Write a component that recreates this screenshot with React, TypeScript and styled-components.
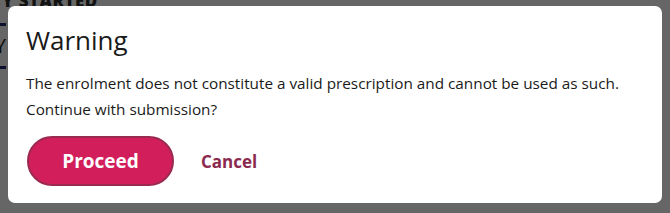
import React from 'react'
import styled, { createGlobalStyle } from 'styled-components'

const GlobalStyle = createGlobalStyle`
  html, body {
    margin: 0;
    padding: 0;
    background: #ffffff;
  }
  body {
    font-family: 'Open Sans', 'Liberation Sans', sans-serif;
  }
`

export default function App() {
    return (
        <Page>
            <GlobalStyle />
            <Behind>
                <StepTitle>Y STARTED</StepTitle>
                <StepBox>Y</StepBox>
            </Behind>

            <Overlay>
                <Modal role="dialog" aria-labelledby="warning_title">
                    <Title id="warning_title">Warning</Title>
                    <Message>
                        The enrolment does not constitute a valid prescription and cannot be used as such.
                        <br />
                        Continue with submission?
                    </Message>
                    <Actions>
                        <PrimaryButton type="button">Proceed</PrimaryButton>
                        <LinkButton type="button">Cancel</LinkButton>
                    </Actions>
                </Modal>
            </Overlay>
        </Page>
    )
}

const Page = styled.div`
  position: relative;
  width: 670px;
  height: 213px;
  overflow: hidden;
`

const Behind = styled.div`
  display: flex;
  flex-direction: column;
  margin-left: -60px;
  margin-top: -7px;
`

const StepTitle = styled.div`
  margin-left: 62px;
  font-weight: 800;
  font-size: 17px;
  line-height: 15px;
  letter-spacing: 0.5px;
  color: #2e2e2e;
`

const StepBox = styled.div`
  margin-top: 15px;
  width: 66px;
  height: 40px;
  border-top: 3px solid #1f2a6e;
  border-bottom: 3px solid #1f2a6e;
  text-align: right;
  font-size: 20px;
  line-height: 40px;
  color: #222;
`

const Overlay = styled.div`
  position: absolute;
  inset: 0;
  background: rgba(0, 0, 0, 0.6);
  padding: 6px 8px 10px 8px;
  box-sizing: border-box;
`

const Modal = styled.div`
  box-sizing: border-box;
  width: 654px;
  height: 197px;
  background: #ffffff;
  border-radius: 7px;
  padding: 17px 18px 0 18px;
  color: #1a1a1a;
`

const Title = styled.h2`
  margin: 0;
  font-size: 26px;
  font-weight: 400;
  line-height: 34px;
  color: #1a1a1a;
`

const Message = styled.p`
  margin: 13px 0 0 0;
  font-size: 15.3px;
  line-height: 26px;
  color: #1a1a1a;
`

const Actions = styled.div`
  display: flex;
  align-items: center;
  gap: 27px;
  margin-top: 14px;
  padding-left: 1px;
`

const PrimaryButton = styled.button`
  width: 147px;
  height: 50px;
  border-radius: 25px;
  border: 2px solid #9b2a4f;
  background: #d21e5b;
  color: #ffffff;
  font-family: 'Open Sans', 'Liberation Sans', sans-serif;
  font-weight: 700;
  font-size: 19px;
  cursor: pointer;
`

const LinkButton = styled.button`
  border: none;
  background: none;
  padding: 0;
  color: #8b2a4f;
  font-family: 'Open Sans', 'Liberation Sans', sans-serif;
  font-weight: 700;
  font-size: 17px;
  cursor: pointer;
`
